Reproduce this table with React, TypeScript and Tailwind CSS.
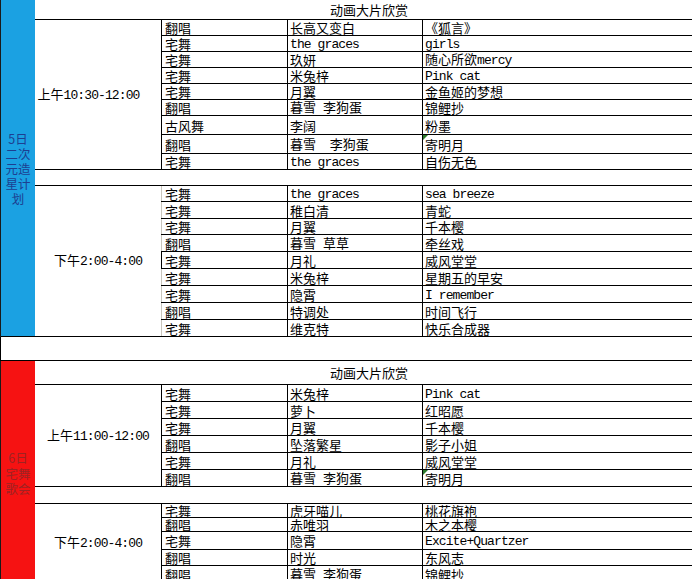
import React from 'react'

type Row = {
  h: string
  type: string
  name: string
  song: string
  mark?: boolean
  soft?: boolean
}

const ascii = /^[\x20-\x7e]+$/

function Txt({ s }: { s: string }) {
  const parts = s.split(/([\x20-\x7e]+)/).filter((p) => p !== '')
  return (
    <span className="whitespace-pre">
      {parts.map((p, i) =>
        ascii.test(p) ? (
          <span key={i} className="font-['Liberation_Mono',monospace] text-[13px] tracking-[-0.9px]">
            {p}
          </span>
        ) : (
          <span key={i}>{p}</span>
        ),
      )}
    </span>
  )
}

const morningA: Row[] = [
  { h: 'h-[16px]', type: '翻唱', name: '长高又变白', song: '《狐言》' },
  { h: 'h-[16px]', type: '宅舞', name: 'the graces', song: 'girls' },
  { h: 'h-[16px]', type: '宅舞', name: '玖妍', song: '随心所欲mercy' },
  { h: 'h-[16px]', type: '宅舞', name: '米兔梓', song: 'Pink cat' },
  { h: 'h-[16px]', type: '宅舞', name: '月翼', song: '金鱼姬的梦想' },
  { h: 'h-[16px]', type: '翻唱', name: '暮雪 李狗蛋', song: '锦鲤抄' },
  { h: 'h-[19px]', type: '古风舞', name: '李阔', song: '粉墨' },
  { h: 'h-[19px]', type: '翻唱', name: '暮雪  李狗蛋', song: '寄明月', mark: true },
  { h: 'h-[16px]', type: '宅舞', name: 'the graces', song: '自伤无色' },
]

const afternoonA: Row[] = [
  { h: 'h-[16px]', type: '宅舞', name: 'the graces', song: 'sea breeze', soft: true },
  { h: 'h-[17px]', type: '宅舞', name: '稚白清', song: '青蛇', soft: true },
  { h: 'h-[16px]', type: '宅舞', name: '月翼', song: '千本樱', soft: true },
  { h: 'h-[17px]', type: '翻唱', name: '暮雪 草草', song: '牵丝戏', soft: true },
  { h: 'h-[17px]', type: '宅舞', name: '月礼', song: '威风堂堂' },
  { h: 'h-[17px]', type: '宅舞', name: '米兔梓', song: '星期五的早安', soft: true },
  { h: 'h-[17px]', type: '宅舞', name: '隐霄', song: 'I remember', soft: true },
  { h: 'h-[17px]', type: '翻唱', name: '特调处', song: '时间飞行', soft: true },
  { h: 'h-[17px]', type: '宅舞', name: '维克特', song: '快乐合成器', soft: true },
]

const morningB: Row[] = [
  { h: 'h-[17px]', type: '宅舞', name: '米兔梓', song: 'Pink cat' },
  { h: 'h-[17px]', type: '宅舞', name: '萝卜', song: '红昭愿' },
  { h: 'h-[17px]', type: '宅舞', name: '月翼', song: '千本樱' },
  { h: 'h-[17px]', type: '翻唱', name: '坠落繁星', song: '影子小姐' },
  { h: 'h-[17px]', type: '宅舞', name: '月礼', song: '威风堂堂' },
  { h: 'h-[17px]', type: '翻唱', name: '暮雪 李狗蛋', song: '寄明月', mark: true },
]

const afternoonB: Row[] = [
  { h: 'h-[14px]', type: '宅舞', name: '虎牙喵儿', song: '桃花旗袍' },
  { h: 'h-[14px]', type: '翻唱', name: '赤唯羽', song: '木之本樱' },
  { h: 'h-[18px]', type: '宅舞', name: '隐霄', song: 'Excite+Quartzer' },
  { h: 'h-[16px]', type: '翻唱', name: '时光', song: '东风志' },
  { h: 'h-[17px]', type: '翻唱', name: '暮雪 李狗蛋', song: '锦鲤抄' },
]

function Block({ time, timeClass, rows }: { time: string; timeClass?: string; rows: Row[] }) {
  return (
    <div className="flex">
      <div
        className={
          'w-[126px] shrink-0 border-b border-black flex items-center justify-center text-[13px] ' +
          (timeClass ?? '')
        }
      >
        <Txt s={time} />
      </div>
      <div className="flex-1 flex flex-col">
        {rows.map((r, i) => (
          <div key={i} className={'flex border-b border-black text-[13px] leading-none ' + r.h}>
            <div
              className={
                'w-[126px] shrink-0 border-l px-[3px] flex items-center ' +
                (r.soft ? 'border-[#c9c6bd]' : 'border-black')
              }
            >
              <Txt s={r.type} />
            </div>
            <div className="w-[135px] shrink-0 border-l border-black px-[2px] flex items-center">
              <Txt s={r.name} />
            </div>
            <div className="relative flex-1 border-l border-black px-[2px] flex items-center">
              {r.mark && (
                <span className="absolute left-0 top-0 w-0 h-0 border-t-[5px] border-r-[5px] border-t-[#2c7a2c] border-r-transparent" />
              )}
              <Txt s={r.song} />
            </div>
          </div>
        ))}
      </div>
    </div>
  )
}

export default function App() {
  return (
    <div className="w-[692px] h-[579px] overflow-hidden bg-white text-black font-['Noto_Sans_CJK_SC',sans-serif]">
      {/* 5日 */}
      <div className="flex border-l border-[#1a1a1a]">
        <div className="w-[34px] shrink-0 bg-[#1ba1e2] border-b border-black flex flex-col items-center justify-center text-[12.5px] leading-[15px] text-[#1d3f91]">
          <span>5日</span>
          <span>二次</span>
          <span>元造</span>
          <span>星计</span>
          <span>划</span>
        </div>
        <div className="flex-1 flex flex-col">
          <div className="h-[20px] border-b border-black flex items-center justify-center pl-[11px] text-[13px]">
            动画大片欣赏
          </div>
          <Block time="上午10:30-12:00" timeClass="pr-[19px]" rows={morningA} />
          <div className="h-[16px] border-b border-black" />
          <Block time="下午2:00-4:00" rows={afternoonA} />
        </div>
      </div>

      <div className="h-[24px] border-b border-l border-black" />

      {/* 6日 */}
      <div className="flex border-l border-[#1a1a1a]">
        <div className="w-[34px] shrink-0 bg-[#f61212] flex flex-col items-center pt-[89px] text-[12.5px] leading-[15.5px] text-[#9e2222]">
          <span>6日</span>
          <span>宅舞</span>
          <span>歌会</span>
        </div>
        <div className="flex-1 flex flex-col">
          <div className="h-[24px] border-b border-black flex items-center justify-center pl-[11px] text-[13px]">
            动画大片欣赏
          </div>
          <Block time="上午11:00-12:00" rows={morningB} />
          <div className="h-[17px] border-b border-black" />
          <Block time="下午2:00-4:00" rows={afternoonB} />
        </div>
      </div>
    </div>
  )
}
